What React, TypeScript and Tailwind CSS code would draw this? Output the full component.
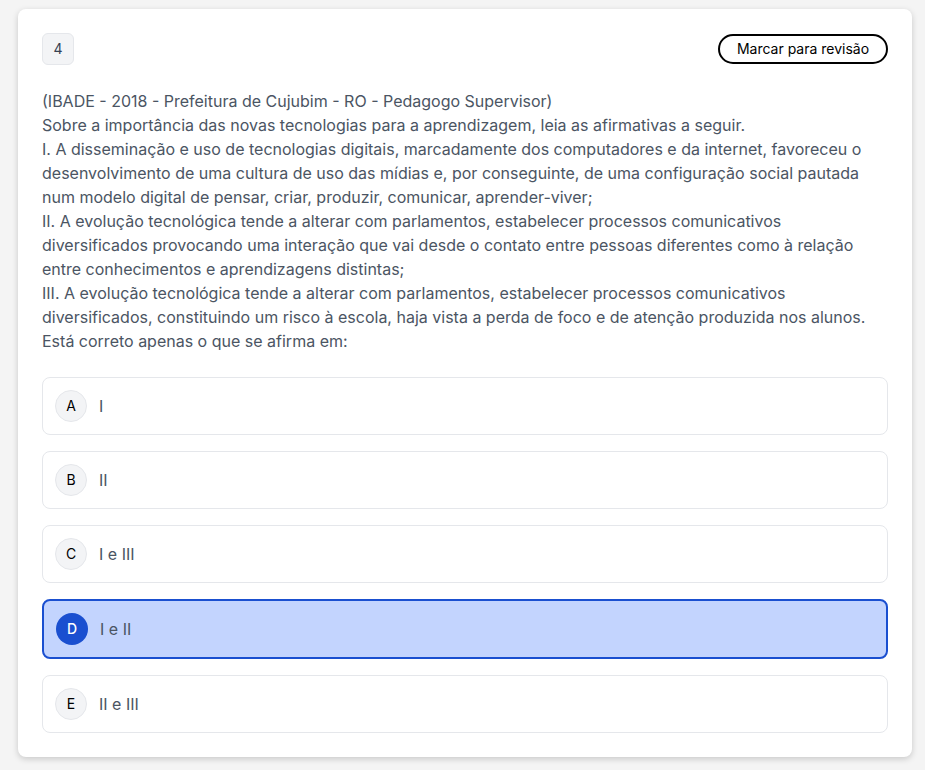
import React from 'react';

const options = [
  { id: 'A', label: 'I' },
  { id: 'B', label: 'II' },
  { id: 'C', label: 'I e III' },
  { id: 'D', label: 'I e II' },
  { id: 'E', label: 'II e III' }
];

const lines = [
  '(IBADE - 2018 - Prefeitura de Cujubim - RO - Pedagogo Supervisor)',
  'Sobre a importância das novas tecnologias para a aprendizagem, leia as afirmativas a seguir.',
  'I. A disseminação e uso de tecnologias digitais, marcadamente dos computadores e da internet, favoreceu o desenvolvimento de uma cultura de uso das mídias e, por conseguinte, de uma configuração social pautada num modelo digital de pensar, criar, produzir, comunicar, aprender-viver;',
  'II. A evolução tecnológica tende a alterar com parlamentos, estabelecer processos comunicativos diversificados provocando uma interação que vai desde o contato entre pessoas diferentes como à relação entre conhecimentos e aprendizagens distintas;',
  'III. A evolução tecnológica tende a alterar com parlamentos, estabelecer processos comunicativos diversificados, constituindo um risco à escola, haja vista a perda de foco e de atenção produzida nos alunos.',
  'Está correto apenas o que se afirma em:'
];

const App: React.FC = () => {
  const selected = 'D';

  return (
    <div className="min-h-screen bg-[#f4f4f4] pt-[9px] px-[13px] pb-4 font-['Inter',sans-serif]">
      <div className="bg-white rounded-lg shadow-[0_2px_6px_rgba(0,0,0,0.18)] p-6 ml-[5px] w-[894px]">
        {/* Header */}
        <div className="flex items-center justify-between">
          <div className="w-8 h-8 flex items-center justify-center rounded-md bg-gray-100 border border-gray-200 text-sm text-gray-700">
            4
          </div>
          <button className="h-[30px] w-[170px] rounded-full border-2 border-black text-sm text-black">
            Marcar para revisão
          </button>
        </div>

        {/* Question text */}
        <div className="mt-6 text-base leading-6 text-[#4b5563]">
          {lines.map((line, i) => (
            <p key={i}>{line}</p>
          ))}
        </div>

        {/* Options */}
        <div className="mt-6 flex flex-col gap-4">
          {options.map(({ id, label }) =>
            id === selected ? (
              <div
                key={id}
                className="flex items-center gap-3 px-3 h-[60px] rounded-lg border-2 border-[#1a4fd0] bg-[#c3d4fe]"
              >
                <span className="w-8 h-8 rounded-full bg-[#1a4fd0] text-white text-sm font-medium flex items-center justify-center">
                  {id}
                </span>
                <span className="text-base text-[#4b5563]">{label}</span>
              </div>
            ) : (
              <div
                key={id}
                className="flex items-center gap-3 px-3 h-[58px] rounded-lg border border-gray-200 bg-white"
              >
                <span className="w-8 h-8 rounded-full bg-gray-100 border border-gray-200 text-black text-sm flex items-center justify-center">
                  {id}
                </span>
                <span className="text-base text-[#4b5563]">{label}</span>
              </div>
            )
          )}
        </div>
      </div>
    </div>
  );
};

export default App;
